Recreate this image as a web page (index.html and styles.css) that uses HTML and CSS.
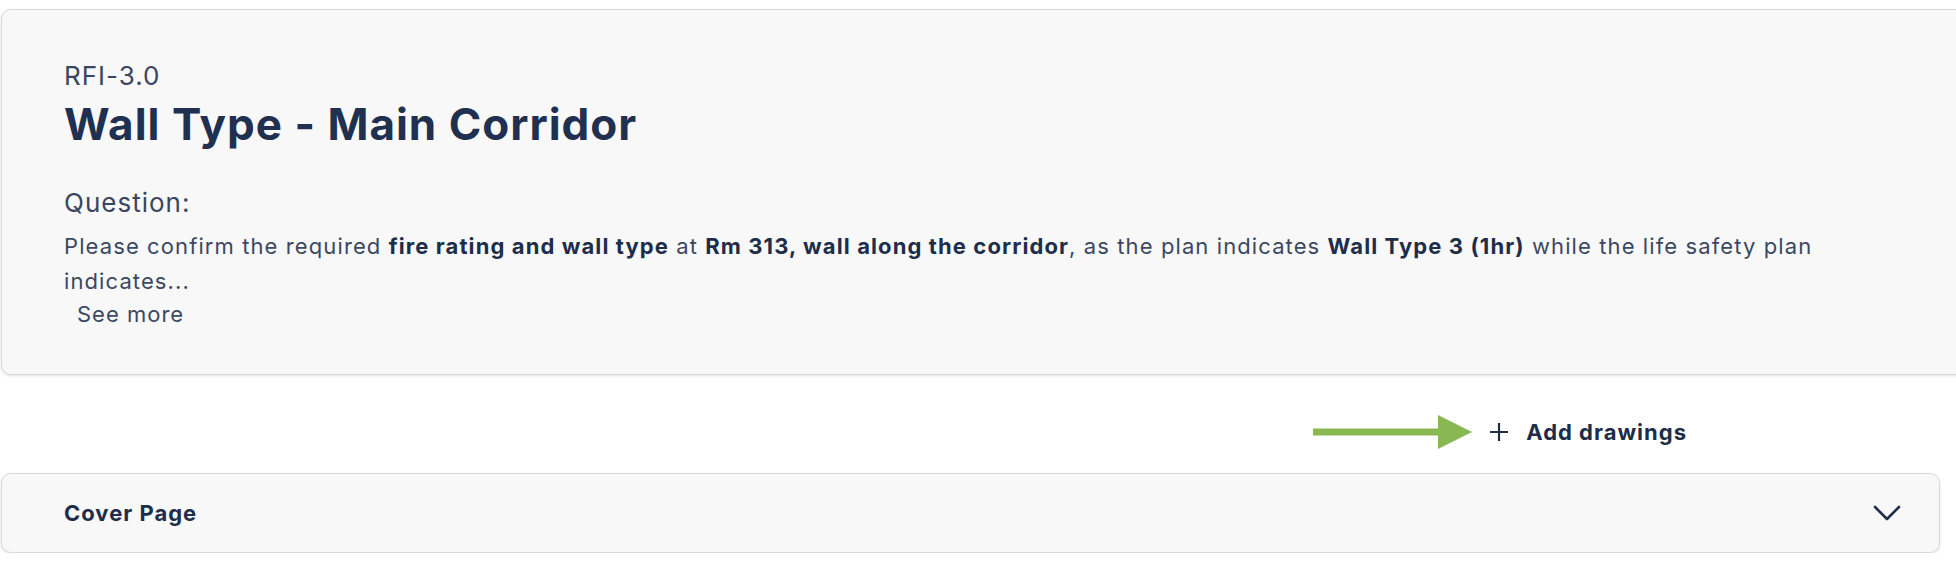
FILE: index.html
```html
<!DOCTYPE html>
<html>
<head>
<meta charset="utf-8">
<link rel="stylesheet" href="styles.css">
</head>
<body>
<div class="page">
  <section class="rfi-card">
    <div class="rfi-id">RFI-3.0</div>
    <h1 class="rfi-title">Wall Type - Main Corridor</h1>
    <div class="q-label">Question:</div>
    <p class="q-text">Please confirm the required <b>fire rating and wall type</b> at <b>Rm 313, wall along the corridor</b>, as the plan indicates <b>Wall Type 3 (1hr)</b> while the life safety plan indicates...</p>
    <button class="see-more">See more</button>
  </section>

  <div class="actions">
    <svg class="pointer" width="159" height="36" viewBox="0 0 159 36"><rect x="0" y="14.5" width="127" height="7" fill="#89b852"/><polygon points="125,1 159,18 125,35" fill="#89b852"/></svg>
    <button class="add-btn">
      <svg class="plus" width="20" height="20" viewBox="0 0 20 20"><path d="M10 1v18M1 10h18" stroke="#1e2d4a" stroke-width="2.2" fill="none"/></svg>
      <span>Add drawings</span>
    </button>
  </div>

  <section class="section-card">
    <span class="section-title">Cover Page</span>
    <svg class="chev" width="28" height="16" viewBox="0 0 28 16"><path d="M2 2l12 12L26 2" stroke="#1e2d4a" stroke-width="2.6" fill="none" stroke-linecap="round" stroke-linejoin="round"/></svg>
  </section>
</div>
</body>
</html>
```

FILE: styles.css
```css
html, body {
  margin: 0;
  padding: 0;
  background: #ffffff;
  overflow: hidden;
}
body {
  font-family: Inter, "Noto Sans", sans-serif;
  color: #3b4860;
}
.page {
  padding: 9px 0 0 1px;
}
.rfi-card {
  margin-right: -30px;
  background: #f8f8f8;
  border: 1px solid #dadada;
  border-radius: 10px;
  box-shadow: 0 1px 3px rgba(0,0,0,0.12);
  padding: 50px 62px 0 62px;
  box-sizing: border-box;
  height: 366px;
}
.rfi-id {
  font-size: 26px;
  line-height: 32px;
  letter-spacing: 1px;
  color: #3a4660;
}
.rfi-title {
  margin: 6px 0 0 0;
  font-size: 44px;
  line-height: 52px;
  font-weight: 700;
  letter-spacing: 1px;
  color: #1f3050;
}
.q-label {
  margin-top: 37px;
  font-size: 26px;
  line-height: 32px;
  letter-spacing: 1px;
  color: #3a4660;
}
.q-text {
  margin: 10px 0 0 0;
  font-size: 22px;
  line-height: 35px;
  letter-spacing: 1.1px;
  color: #3b4860;
}
.q-text b {
  color: #1e2d4a;
  font-weight: 700;
}
.see-more {
  display: block;
  margin: 0 0 0 13px;
  padding: 0;
  border: none;
  background: none;
  font-family: inherit;
  font-size: 22px;
  line-height: 30px;
  letter-spacing: 1px;
  color: #3b4860;
}
.actions {
  display: flex;
  justify-content: flex-end;
  align-items: center;
  gap: 17px;
  margin-top: 39px;
  padding-right: 269px;
  height: 36px;
}
.add-btn {
  display: flex;
  align-items: center;
  gap: 17px;
  border: none;
  background: none;
  padding: 0;
  font-family: inherit;
  font-size: 22px;
  font-weight: 700;
  letter-spacing: 1px;
  color: #1e2d4a;
}
.section-card {
  margin: 23px 16px 0 0;
  height: 80px;
  box-sizing: border-box;
  background: #f8f8f8;
  border: 1px solid #dadada;
  border-radius: 10px;
  box-shadow: 0 1px 3px rgba(0,0,0,0.12);
  display: flex;
  align-items: center;
  justify-content: space-between;
  padding: 0 38px 0 62px;
}
.section-title {
  font-size: 22px;
  font-weight: 700;
  letter-spacing: 1px;
  color: #1e2d4a;
}
```
